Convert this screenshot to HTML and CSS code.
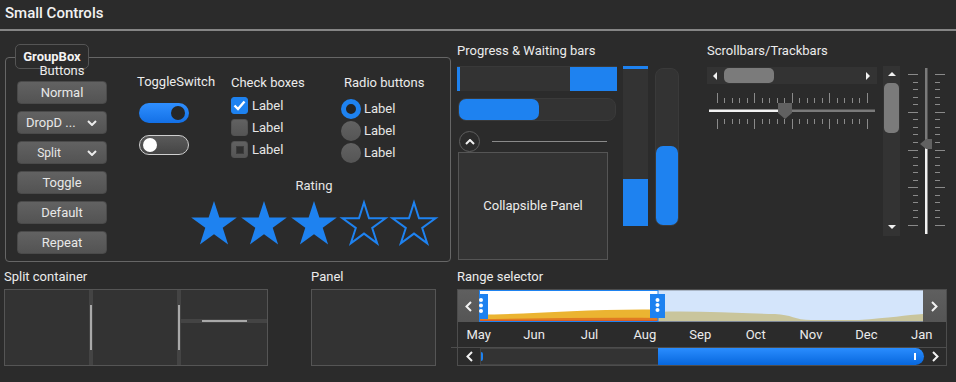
FILE: index.html
```html
<!DOCTYPE html>
<html>
<head>
<meta charset="utf-8">
<link rel="stylesheet" href="styles.css">
</head>
<body>
<header class="hdr">Small Controls</header>
<main class="main">
  <section class="row-top">
    <div class="groupbox">
      <div class="gb-label"><span class="gb-text">GroupBox</span></div>
      <div class="col-buttons">
        <div class="col-title btn-title">Buttons</div>
        <div class="btn first">Normal</div>
        <div class="btn dd"><span>DropD ...</span><svg class="chev" width="10" height="6" viewBox="0 0 10 6"><polyline points="1,1 5,5 9,1"/></svg></div>
        <div class="btn split"><span class="split-text">Split</span><svg class="chev" width="10" height="6" viewBox="0 0 10 6"><polyline points="1,1 5,5 9,1"/></svg></div>
        <div class="btn">Toggle</div>
        <div class="btn">Default</div>
        <div class="btn">Repeat</div>
      </div>
      <div class="gb-right">
        <div class="gb-cols">
          <div class="col-toggle">
            <div class="col-title">ToggleSwitch</div>
            <div class="toggle on"><span class="knob"></span></div>
            <div class="toggle off"><span class="knob"></span></div>
          </div>
          <div class="col-check">
            <div class="col-title">Check boxes</div>
            <div class="check-row first"><span class="cb checked"><svg width="13" height="11" viewBox="0 0 13 11"><polyline points="1.5,5.5 5,9 11.5,1.5"/></svg></span>Label</div>
            <div class="check-row"><span class="cb"></span>Label</div>
            <div class="check-row"><span class="cb ind"><span class="ind-in"></span></span>Label</div>
          </div>
          <div class="col-radio">
            <div class="col-title radio-title">Radio buttons</div>
            <div class="radio-row first"><span class="rb sel"></span>Label</div>
            <div class="radio-row"><span class="rb"></span>Label</div>
            <div class="radio-row"><span class="rb"></span>Label</div>
          </div>
        </div>
        <div class="rating">
          <div class="rating-title">Rating</div>
          <div class="stars">
            <svg class="star" width="48" height="44" viewBox="0 0 48 44"><polygon class="fill" points="24,0 29.39,16.58 46.83,16.58 32.72,26.83 38.11,43.42 24,33.17 9.89,43.42 15.28,26.83 1.17,16.58 18.61,16.58"/></svg>
            <svg class="star" width="48" height="44" viewBox="0 0 48 44"><polygon class="fill" points="24,0 29.39,16.58 46.83,16.58 32.72,26.83 38.11,43.42 24,33.17 9.89,43.42 15.28,26.83 1.17,16.58 18.61,16.58"/></svg>
            <svg class="star" width="48" height="44" viewBox="0 0 48 44"><polygon class="fill" points="24,0 29.39,16.58 46.83,16.58 32.72,26.83 38.11,43.42 24,33.17 9.89,43.42 15.28,26.83 1.17,16.58 18.61,16.58"/></svg>
            <svg class="star" width="48" height="44" viewBox="0 0 48 44"><polygon class="outline" points="24,1.5 29.0,17.3 45.5,17.3 32.2,27.0 37.2,42.4 24,32.6 10.8,42.4 15.8,27.0 2.5,17.3 19.0,17.3"/></svg>
            <svg class="star" width="48" height="44" viewBox="0 0 48 44"><polygon class="outline" points="24,1.5 29.0,17.3 45.5,17.3 32.2,27.0 37.2,42.4 24,32.6 10.8,42.4 15.8,27.0 2.5,17.3 19.0,17.3"/></svg>
          </div>
        </div>
      </div>
    </div>

    <div class="progress-sec">
      <div class="sec-title">Progress &amp; Waiting bars</div>
      <div class="prog-row">
        <div class="prog-left">
          <div class="pbar1"><span class="pb1-left"></span><span class="pb1-right"></span></div>
          <div class="pbar2"><span class="pb2-fill"></span></div>
          <div class="collapse-head">
            <span class="collapse-btn"><svg width="10" height="6" viewBox="0 0 10 6"><polyline points="1,5 5,1 9,5"/></svg></span>
            <span class="collapse-line"></span>
          </div>
          <div class="collapse-panel">Collapsible Panel</div>
        </div>
        <div class="vbar1"><span class="vb1-top"></span><span class="vb1-bot"></span></div>
        <div class="vbar2"><span class="vb2-fill"></span></div>
      </div>
    </div>

    <div class="scroll-sec">
      <div class="sec-title">Scrollbars/Trackbars</div>
      <div class="scroll-row">
        <div class="scroll-left">
          <div class="hscroll">
            <span class="arr-left"></span>
            <span class="hthumb"></span>
            <span class="spacer"></span>
            <span class="arr-right"></span>
          </div>
          <svg class="htrack" width="170" height="37" viewBox="0 0 170 37">
            <path class="tick" d="M10.5 0V10M17.5 5V10M25.5 5V10M32.5 5V10M40.5 5V10M47.5 0V10M55.5 5V10M62.5 5V10M70.5 5V10M77.5 5V10M85.5 0V10M92.5 5V10M100.5 5V10M107.5 5V10M115.5 5V10M122.5 0V10M130.5 5V10M137.5 5V10M145.5 5V10M152.5 5V10M160.5 0V10"/>
            <path class="tick" d="M10.5 26V36M17.5 26V31M25.5 26V31M32.5 26V31M40.5 26V31M47.5 26V36M55.5 26V31M62.5 26V31M70.5 26V31M77.5 26V31M85.5 26V36M92.5 26V31M100.5 26V31M107.5 26V31M115.5 26V31M122.5 26V36M130.5 26V31M137.5 26V31M145.5 26V31M152.5 26V31M160.5 26V36"/>
            <rect x="2" y="16.5" width="69" height="2.5" fill="#f2f2f2"/>
            <rect x="71" y="16.5" width="97" height="2.5" fill="#7a7a7a"/>
            <polygon points="71,10 85,10 85,20 78,26 71,20" fill="#616161"/>
          </svg>
        </div>
        <div class="vscroll">
          <span class="arr-up"></span>
          <span class="vthumb"></span>
          <span class="spacer"></span>
          <span class="arr-down"></span>
        </div>
        <svg class="vtrack" width="38" height="166" viewBox="0 0 38 166">
          <path class="tick" d="M0 6.5H10M5 14.5H10M5 21.5H10M5 29.5H10M5 36.5H10M0 44.5H10M5 51.5H10M5 59.5H10M5 66.5H10M5 74.5H10M0 82.5H10M5 89.5H10M5 97.5H10M5 104.5H10M0 119.5H10M5 112.5H10M5 127.5H10M5 134.5H10M5 142.5H10M5 149.5H10M0 157.5H10"/>
          <path class="tick" d="M27 6.5H37M27 14.5H32M27 21.5H32M27 29.5H32M27 36.5H32M27 44.5H37M27 51.5H32M27 59.5H32M27 66.5H32M27 74.5H32M27 82.5H37M27 89.5H32M27 97.5H32M27 104.5H32M27 119.5H37M27 112.5H32M27 127.5H32M27 134.5H32M27 142.5H32M27 149.5H32M27 157.5H37"/>
          <rect x="17" y="0" width="2.5" height="76" fill="#7a7a7a"/>
          <rect x="17" y="76" width="2.5" height="90" fill="#f2f2f2"/>
          <polygon points="24,71 24,81 18,81 12,76 18,71" fill="#616161"/>
        </svg>
      </div>
    </div>
  </section>

  <section class="row-bottom">
    <div class="split-sec">
      <div class="sec-title">Split container</div>
      <div class="split-box">
        <div class="pane p1"></div>
        <div class="vsplit"><span class="vgrip"></span></div>
        <div class="pane p2"></div>
        <div class="vsplit"><span class="vgrip"></span></div>
        <div class="pane3">
          <div class="pane p3a"></div>
          <div class="hsplit"><span class="hgrip"></span></div>
          <div class="pane p3b"></div>
        </div>
      </div>
    </div>

    <div class="panel-sec">
      <div class="sec-title">Panel</div>
      <div class="panel-box"></div>
    </div>

    <div class="range-sec">
      <div class="sec-title">Range selector</div>
      <div class="range-box">
        <div class="range-top">
          <div class="rbtn"><svg width="7" height="11" viewBox="0 0 7 11"><polyline points="6,1 1.5,5.5 6,10"/></svg></div>
          <svg class="chart" width="444" height="32" viewBox="0 0 444 32">
            <rect x="0" y="0" width="179" height="32" fill="#ffffff"/>
            <rect x="179" y="0" width="265" height="32" fill="#d4e5fb"/>
            <path d="M179,22 C215,20.5 255,23.5 296,24 C312,24.5 316,30 332,30 L380,30 C410,28 428,25 444,24 L444,32 L179,32 Z" fill="#c9c59c"/>
            <path d="M0,24.5 C50,24.5 110,18.5 179,19.5 L179,32 L0,32 Z" fill="#ebb431"/>
            <path d="M0,29 C60,28.5 120,27.5 179,28 L179,32 L0,32 Z" fill="#e07a22"/>
            <path d="M0,30.5 L179,30.5 L179,32 L0,32 Z" fill="#d2442a"/>
            <line x1="179" y1="0.5" x2="444" y2="0.5" stroke="#aab6c6"/>
            <line x1="179" y1="31.5" x2="444" y2="31.5" stroke="#7d8796"/>
            <rect x="0.5" y="0.5" width="178.5" height="31" fill="none" stroke="#1e82f0"/>
            <rect x="-6" y="4" width="15" height="25" fill="#1e82f0"/>
            <circle cx="2" cy="10" r="2" fill="#fff"/><circle cx="2" cy="15.5" r="2" fill="#fff"/><circle cx="2" cy="21" r="2" fill="#fff"/>
            <rect x="171" y="4" width="15" height="24" fill="#1e82f0"/>
            <circle cx="178.5" cy="10" r="2" fill="#fff"/><circle cx="178.5" cy="15" r="2" fill="#fff"/><circle cx="178.5" cy="20" r="2" fill="#fff"/>
          </svg>
          <div class="rbtn right"><svg width="7" height="11" viewBox="0 0 7 11"><polyline points="1,1 5.5,5.5 1,10"/></svg></div>
        </div>
        <div class="months">
          <span>May</span><span>Jun</span><span>Jul</span><span>Aug</span><span>Sep</span><span>Oct</span><span>Nov</span><span>Dec</span><span>Jan</span>
        </div>
        <div class="range-scroll">
          <div class="rs-arrow"><svg width="7" height="11" viewBox="0 0 7 11"><polyline points="6,1 1.5,5.5 6,10"/></svg></div>
          <div class="rs-track"><span class="rs-sliver"></span></div>
          <div class="rs-thumb"><span class="rs-mark"></span></div>
          <div class="rs-arrow"><svg width="7" height="11" viewBox="0 0 7 11"><polyline points="1,1 5.5,5.5 1,10"/></svg></div>
        </div>
      </div>
    </div>
  </section>
</main>
</body>
</html>
```

FILE: styles.css
```css
* { box-sizing: border-box; }

body {
  margin: 0;
  width: 956px;
  height: 382px;
  overflow: hidden;
  background: #2b2b2b;
  color: #e6e6e6;
  font-family: Roboto, "Liberation Sans", sans-serif;
  font-size: 13px;
  line-height: 16px;
}

.hdr {
  height: 31px;
  padding-left: 5px;
  border-bottom: 2px solid #858585;
  font-size: 15px;
  font-weight: 500;
  line-height: 26px;
  color: #f2f2f2;
}

/* ---------- top row ---------- */
.row-top {
  display: flex;
  height: 234px;
}

.groupbox {
  position: relative;
  margin: 26px 0 0 5px;
  width: 446px;
  height: 205px;
  border: 1px solid #666;
  border-radius: 4px;
  padding: 4px 0 0 11px;
  display: flex;
  align-items: flex-start;
}

.gb-label {
  position: absolute;
  left: 9px;
  top: -14px;
  width: 74px;
  height: 25px;
  border: 1px solid #555;
  border-radius: 5px;
  background: #2b2b2b;
  display: flex;
  align-items: center;
  justify-content: center;
  z-index: 1;
}

.gb-text {
  font-weight: 700;
  line-height: 13px;
  color: #f4f4f4;
}

.col-title {
  line-height: 16px;
  color: #ececec;
}

.col-buttons {
  width: 90px;
  display: flex;
  flex-direction: column;
}

.btn-title {
  text-align: center;
  position: relative;
  z-index: 2;
  line-height: 13px;
  margin-top: 2px;
  margin-bottom: 1px;
}

.btn {
  height: 23px;
  margin-top: 7px;
  border-radius: 4px;
  background: linear-gradient(#626262, #535353);
  border: 1px solid #4a4a4a;
  display: flex;
  align-items: center;
  justify-content: center;
  color: #e8e8e8;
}

.btn.first { margin-top: 3px; }

.btn.dd {
  justify-content: space-between;
  padding: 0 9px 0 8px;
}

.btn.split {
  justify-content: space-between;
  padding: 0 9px 0 0;
}

.split-text {
  width: 62px;
  text-align: center;
  font-size: 12px;
}

.chev polyline {
  fill: none;
  stroke: #ececec;
  stroke-width: 2;
}

.gb-right {
  margin-left: 30px;
  display: flex;
  flex-direction: column;
}

.gb-cols {
  display: flex;
  align-items: flex-start;
}

.col-toggle {
  width: 94px;
  padding-top: 12px;
}

.toggle {
  position: relative;
  width: 50px;
  height: 20px;
  border-radius: 10px;
  margin-left: 2px;
}

.toggle.on {
  margin-top: 13px;
  background: linear-gradient(#2f8fff, #1370e6);
}

.toggle.on .knob {
  position: absolute;
  right: 4px;
  top: 3px;
  width: 14px;
  height: 14px;
  border-radius: 50%;
  background: #262626;
}

.toggle.off {
  margin-top: 12px;
  border: 1.5px solid #cfcfcf;
  background: linear-gradient(#5a5a5a, #454545);
}

.toggle.off .knob {
  position: absolute;
  left: 2.5px;
  top: 1.5px;
  width: 14px;
  height: 14px;
  border-radius: 50%;
  background: #ffffff;
}

.col-check {
  width: 110px;
  padding-top: 13px;
}

.check-row {
  height: 17px;
  margin-top: 5px;
  display: flex;
  align-items: center;
  gap: 4px;
  line-height: 17px;
}

.check-row.first { margin-top: 6px; }

.cb {
  width: 17px;
  height: 17px;
  border-radius: 3px;
  background: linear-gradient(#616161, #555);
  border: 1px solid #525252;
  display: flex;
  align-items: center;
  justify-content: center;
}

.cb.checked {
  background: #1e82f0;
  border-color: #1e82f0;
}

.cb.checked polyline {
  fill: none;
  stroke: #fff;
  stroke-width: 2.4;
}

.ind-in {
  width: 8px;
  height: 8px;
  background: #2f2f2f;
  border: 1px solid #3c3c3c;
}

.col-radio {
  padding-top: 13px;
  margin-left: 0;
}

.radio-title { padding-left: 3px; }

.radio-row {
  height: 22px;
  display: flex;
  align-items: center;
  gap: 3px;
}

.radio-row.first { margin-top: 7px; }

.rb {
  width: 20px;
  height: 20px;
  border-radius: 50%;
  background: linear-gradient(#626262, #555);
}

.rb.sel {
  background: #242424;
  border: 5px solid #1e82f0;
}

.rating {
  margin-left: 53px;
  width: 250px;
  margin-top: 14px;
}

.rating-title {
  width: 248px;
  text-align: center;
  line-height: 16px;
}

.stars {
  margin-top: 7px;
  display: flex;
  gap: 2px;
}

.star { overflow: visible; }

.star .fill { fill: #1e82f0; }

.star .outline {
  fill: none;
  stroke: #1e82f0;
  stroke-width: 2;
  stroke-linejoin: miter;
}

/* ---------- progress ---------- */
.progress-sec {
  margin-left: 6px;
  width: 223px;
  padding-top: 12px;
}

.sec-title {
  line-height: 16px;
  color: #ececec;
}

.prog-row {
  margin-top: 7px;
  display: flex;
  align-items: flex-start;
}

.prog-left {
  width: 160px;
}

.pbar1 {
  height: 25px;
  background: #333;
  border-top: 1px solid #393939;
  display: flex;
  justify-content: space-between;
}

.pb1-left {
  width: 3px;
  background: #1e82f0;
}

.pb1-right {
  width: 47px;
  background: #1e82f0;
}

.pbar2 {
  margin: 7px 1px 0 1px;
  height: 23px;
  border-radius: 8px;
  background: #333;
  border: 1px solid #3a3a3a;
  display: flex;
}

.pb2-fill {
  width: 80px;
  border-radius: 7px;
  background: #1e82f0;
}

.collapse-head {
  margin-top: 10px;
  height: 21px;
  display: flex;
  align-items: center;
}

.collapse-btn {
  margin-left: 2px;
  width: 21px;
  height: 21px;
  border-radius: 50%;
  border: 1px solid #5e5e5e;
  display: flex;
  align-items: center;
  justify-content: center;
}

.collapse-btn polyline {
  fill: none;
  stroke: #f0f0f0;
  stroke-width: 2;
}

.collapse-line {
  margin-left: 12px;
  width: 115px;
  height: 1px;
  background: #8a8a8a;
}

.collapse-panel {
  margin-left: 1px;
  width: 150px;
  height: 108px;
  background: #333;
  border: 1px solid #555;
  display: flex;
  align-items: center;
  justify-content: center;
  color: #ececec;
}

.vbar1 {
  margin-left: 6px;
  width: 25px;
  height: 160px;
  background: #333;
  display: flex;
  flex-direction: column;
  justify-content: space-between;
}

.vb1-top {
  height: 3px;
  background: #1e82f0;
}

.vb1-bot {
  height: 47px;
  background: #1e82f0;
}

.vbar2 {
  margin: 2px 0 0 7px;
  width: 24px;
  height: 158px;
  border-radius: 8px;
  background: #333;
  border: 1px solid #3a3a3a;
  display: flex;
  flex-direction: column;
  justify-content: flex-end;
}

.vb2-fill {
  height: 79px;
  border-radius: 7px;
  background: #1e82f0;
}

/* ---------- scrollbars ---------- */
.scroll-sec {
  margin-left: 27px;
  padding-top: 12px;
}

.scroll-row {
  margin-top: 7px;
  display: flex;
  align-items: flex-start;
}

.scroll-left {
  width: 170px;
}

.hscroll {
  margin-top: 1px;
  height: 17px;
  background: #333;
  display: flex;
  align-items: center;
  padding: 0 7px 0 6px;
}

.arr-left {
  width: 0;
  height: 0;
  border-top: 4px solid transparent;
  border-bottom: 4px solid transparent;
  border-right: 4px solid #f2f2f2;
}

.arr-right {
  width: 0;
  height: 0;
  border-top: 4px solid transparent;
  border-bottom: 4px solid transparent;
  border-left: 4px solid #f2f2f2;
}

.hthumb {
  margin-left: 7px;
  width: 50px;
  height: 15px;
  border-radius: 5px;
  background: #7b7b7b;
}

.spacer { flex: 1; }

.htrack {
  display: block;
  margin-top: 9px;
  overflow: visible;
}

.tick {
  stroke: #8a8a8a;
  stroke-width: 1;
  fill: none;
}

.vscroll {
  margin-left: 6px;
  width: 17px;
  height: 170px;
  background: #333;
  display: flex;
  flex-direction: column;
  align-items: center;
  padding: 6px 0 7px 0;
}

.arr-up {
  width: 0;
  height: 0;
  border-left: 4px solid transparent;
  border-right: 4px solid transparent;
  border-bottom: 4px solid #f2f2f2;
}

.arr-down {
  width: 0;
  height: 0;
  border-left: 4px solid transparent;
  border-right: 4px solid transparent;
  border-top: 4px solid #f2f2f2;
}

.vthumb {
  margin-top: 7px;
  width: 15px;
  height: 50px;
  border-radius: 5px;
  background: #7b7b7b;
}

.vtrack {
  display: block;
  margin: 2px 0 0 8px;
  overflow: visible;
}

/* ---------- bottom row ---------- */
.row-bottom {
  display: flex;
  align-items: flex-start;
}

.row-bottom .sec-title {
  margin-top: 4px;
}

.split-sec {
  margin-left: 4px;
  width: 264px;
}

.split-box {
  margin-top: 4px;
  height: 77px;
  border: 1px solid #555;
  display: flex;
}

.pane {
  background: #333;
}

.p1, .p2 { width: 84px; }

.vsplit {
  width: 4px;
  background: #444;
  display: flex;
  align-items: center;
  justify-content: center;
}

.vgrip {
  width: 2px;
  height: 45px;
  background: #a9a9a9;
}

.pane3 {
  flex: 1;
  display: flex;
  flex-direction: column;
}

.p3a { height: 29px; }

.hsplit {
  height: 4px;
  background: #444;
  display: flex;
  align-items: center;
  justify-content: center;
}

.hgrip {
  width: 45px;
  height: 2px;
  background: #a9a9a9;
}

.p3b { flex: 1; }

.panel-sec {
  margin-left: 43px;
  width: 125px;
}

.panel-box {
  margin-top: 4px;
  height: 77px;
  background: #333;
  border: 1px solid #555;
}

.range-sec {
  margin-left: 21px;
  width: 490px;
}

.range-box {
  margin-top: 4px;
  border: 1px solid #4d4d4d;
}

.range-top {
  height: 32px;
  display: flex;
}

.rbtn {
  width: 21px;
  height: 32px;
  background: linear-gradient(#5f5f5f, #555);
  display: flex;
  align-items: center;
  justify-content: center;
}

.rbtn.right { width: 23px; }

.rbtn polyline,
.rs-arrow polyline {
  fill: none;
  stroke: #f2f2f2;
  stroke-width: 2;
}

.chart {
  display: block;
  overflow: hidden;
}

.months {
  height: 26px;
  margin-left: -7px;
  display: grid;
  grid-template-columns: repeat(9, 55.4px);
  align-items: center;
  border-bottom: 1px solid #4d4d4d;
}

.months span {
  text-align: center;
  color: #ececec;
}

.range-scroll {
  height: 17px;
  display: flex;
}

.rs-arrow {
  width: 22px;
  display: flex;
  align-items: center;
  justify-content: center;
}

.rs-track {
  width: 178px;
  background: #333;
  border: 1px solid #444;
  border-right: none;
  display: flex;
  align-items: center;
}

.rs-sliver {
  width: 2px;
  height: 9px;
  background: #1e82f0;
  border-radius: 0 2px 2px 0;
}

.rs-thumb {
  width: 266px;
  background: linear-gradient(#2a8dff, #0767dd);
  border-radius: 0 9px 9px 0;
  display: flex;
  align-items: center;
  justify-content: flex-end;
  padding-right: 8px;
}

.rs-mark {
  width: 2px;
  height: 7px;
  background: #fff;
}
```
